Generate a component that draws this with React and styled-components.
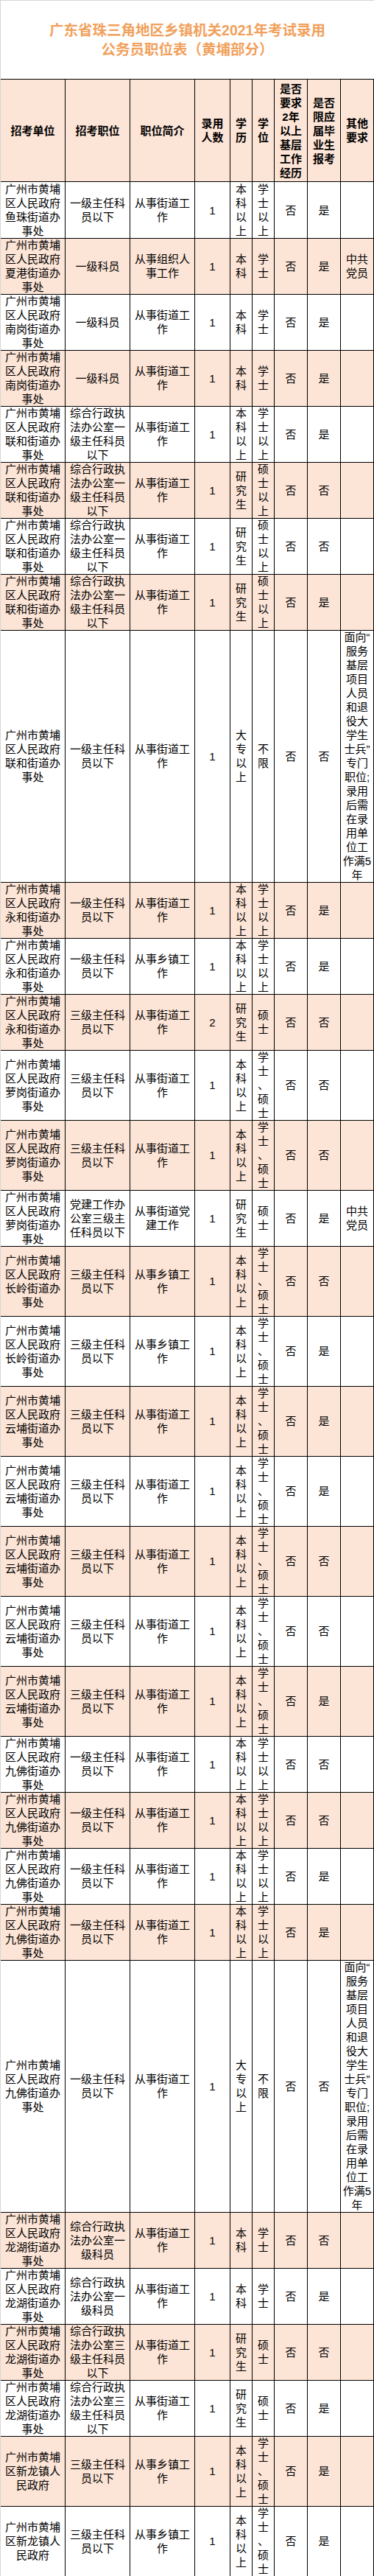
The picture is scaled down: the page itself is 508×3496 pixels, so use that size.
import React from 'react';
import styled, { createGlobalStyle } from 'styled-components';

const GlobalStyle = createGlobalStyle`
  html, body {
    margin: 0;
    padding: 0;
    background: #fff;
  }
  body {
    font-family: "Liberation Sans", "Noto Sans CJK SC", sans-serif;
    color: #000;
  }
`;

const LINE = 19;
const COLS = '88px 88px 88px 48px 30px 30px 45px 45px 45px';

const Page = styled.div`
  width: 508px;
  box-sizing: border-box;
  border-left: 1px solid #d6d6d6;
  border-top: 1px solid #d6d6d6;
`;

const Title = styled.h1`
  margin: 0;
  height: 106px;
  display: flex;
  flex-direction: column;
  align-items: center;
  justify-content: center;
  font-size: 19.5px;
  line-height: 26px;
  font-weight: 700;
  color: #f1a15c;
`;

const Table = styled.div`
  border-top: 1px solid #000;
`;

const Row = styled.div`
  display: grid;
  grid-template-columns: ${COLS};
  height: ${({ $h }) => $h}px;
  background: ${({ $tint }) => ($tint ? '#fce4d6' : '#fff')};
  font-weight: ${({ $head }) => ($head ? 700 : 400)};
`;

const Cell = styled.div`
  box-sizing: border-box;
  border-right: 1px solid #000;
  border-bottom: 1px solid #000;
  display: flex;
  align-items: center;
  justify-content: center;
  text-align: center;
  white-space: pre-line;
  font-size: 15px;
  line-height: ${LINE}px;
  min-width: 0;
`;

const HEAD = [
  '招考单位',
  '招考职位',
  '职位简介',
  '录用\n人数',
  '学\n历',
  '学\n位',
  '是否\n要求\n2年\n以上\n基层\n工作\n经历',
  '是否\n限应\n届毕\n业生\n报考',
  '其他\n要求',
];

// chars per line for each column; 0 = keep text as written
const WRAP = [5, 5, 5, 0, 1, 1, 0, 0, 0];

const chunk = (text, n) => {
  if (!n) return text;
  const chars = Array.from(text);
  const out = [];
  for (let i = 0; i < chars.length; i += n) out.push(chars.slice(i, i + n).join(''));
  return out.join('\n');
};

const U = (name) => `广州市黄埔区人民政府${name}街道办事处`;
const TOWN = '广州市黄埔区新龙镇人民政府';
const PARTY = '中共\n党员';
const FACE =
  '面向“\n服务\n基层\n项目\n人员\n和退\n役大\n学生\n士兵”\n专门\n职位;\n录用\n后需\n在录\n用单\n位工\n作满5\n年';
const ZF1 = '综合行政执法办公室一级主任科员以下';
const ZF3 = '综合行政执法办公室三级主任科员以下';
const ZK = '综合行政执法办公室一级科员';
const J1 = '一级主任科员以下';
const J3 = '三级主任科员以下';
const JD = '从事街道工作';
const XZ = '从事乡镇工作';
const BS = ['本科以上', '学士以上'];
const BX = ['本科以上', '学士、硕士'];

const rows = [
  [U('鱼珠'), J1, JD, '1', ...BS, '否', '是', ''],
  [U('夏港'), '一级科员', '从事组织人事工作', '1', '本科', '学士', '否', '是', PARTY],
  [U('南岗'), '一级科员', JD, '1', '本科', '学士', '否', '是', ''],
  [U('南岗'), '一级科员', JD, '1', '本科', '学士', '否', '是', ''],
  [U('联和'), ZF1, JD, '1', ...BS, '否', '是', ''],
  [U('联和'), ZF1, JD, '1', '研究生', '硕士以上', '否', '否', ''],
  [U('联和'), ZF1, JD, '1', '研究生', '硕士以上', '否', '否', ''],
  [U('联和'), ZF1, JD, '1', '研究生', '硕士以上', '否', '是', ''],
  [U('联和'), J1, JD, '1', '大专以上', '不限', '否', '否', FACE],
  [U('永和'), J1, JD, '1', ...BS, '否', '是', ''],
  [U('永和'), J1, XZ, '1', ...BS, '否', '是', ''],
  [U('永和'), J3, JD, '2', '研究生', '硕士', '否', '否', ''],
  [U('萝岗'), J3, JD, '1', ...BX, '否', '否', ''],
  [U('萝岗'), J3, JD, '1', ...BX, '否', '否', ''],
  [U('萝岗'), '党建工作办公室三级主任科员以下', '从事街道党建工作', '1', '研究生', '硕士', '否', '是', PARTY],
  [U('长岭'), J3, XZ, '1', ...BX, '否', '否', ''],
  [U('长岭'), J3, XZ, '1', ...BX, '否', '是', ''],
  [U('云埔'), J3, JD, '1', ...BX, '否', '是', ''],
  [U('云埔'), J3, JD, '1', ...BX, '否', '是', ''],
  [U('云埔'), J3, JD, '1', ...BX, '否', '否', ''],
  [U('云埔'), J3, JD, '1', ...BX, '否', '否', ''],
  [U('云埔'), J3, JD, '1', ...BX, '否', '是', ''],
  [U('九佛'), J1, JD, '1', ...BS, '否', '否', ''],
  [U('九佛'), J1, JD, '1', ...BS, '否', '否', ''],
  [U('九佛'), J1, JD, '1', ...BS, '否', '是', ''],
  [U('九佛'), J1, JD, '1', ...BS, '否', '是', ''],
  [U('九佛'), J1, JD, '1', '大专以上', '不限', '否', '否', FACE],
  [U('龙湖'), ZK, JD, '1', '本科', '学士', '否', '否', ''],
  [U('龙湖'), ZK, JD, '1', '本科', '学士', '否', '是', ''],
  [U('龙湖'), ZF3, JD, '1', '研究生', '硕士', '否', '否', ''],
  [U('龙湖'), ZF3, JD, '1', '研究生', '硕士', '否', '是', ''],
  [TOWN, J3, XZ, '1', ...BX, '否', '是', ''],
  [TOWN, J3, XZ, '1', ...BX, '否', '是', ''],
];

function DataRow({ cells, tint }) {
  const texts = cells.map((c, i) => chunk(c, WRAP[i]));
  const lines = Math.max(...texts.map((t) => t.split('\n').length));
  return (
    <Row $h={lines * LINE} $tint={tint}>
      {texts.map((t, i) => (
        <Cell key={i}>{t}</Cell>
      ))}
    </Row>
  );
}

export default function App() {
  return (
    <Page>
      <GlobalStyle />
      <Title>
        <span>广东省珠三角地区乡镇机关2021年考试录用</span>
        <span>公务员职位表（黄埔部分）</span>
      </Title>
      <Table>
        <Row $h={139} $tint $head>
          {HEAD.map((h) => (
            <Cell key={h}>{h}</Cell>
          ))}
        </Row>
        {rows.map((r, i) => (
          <DataRow key={i} cells={r} tint={i % 2 === 1} />
        ))}
      </Table>
    </Page>
  );
}
